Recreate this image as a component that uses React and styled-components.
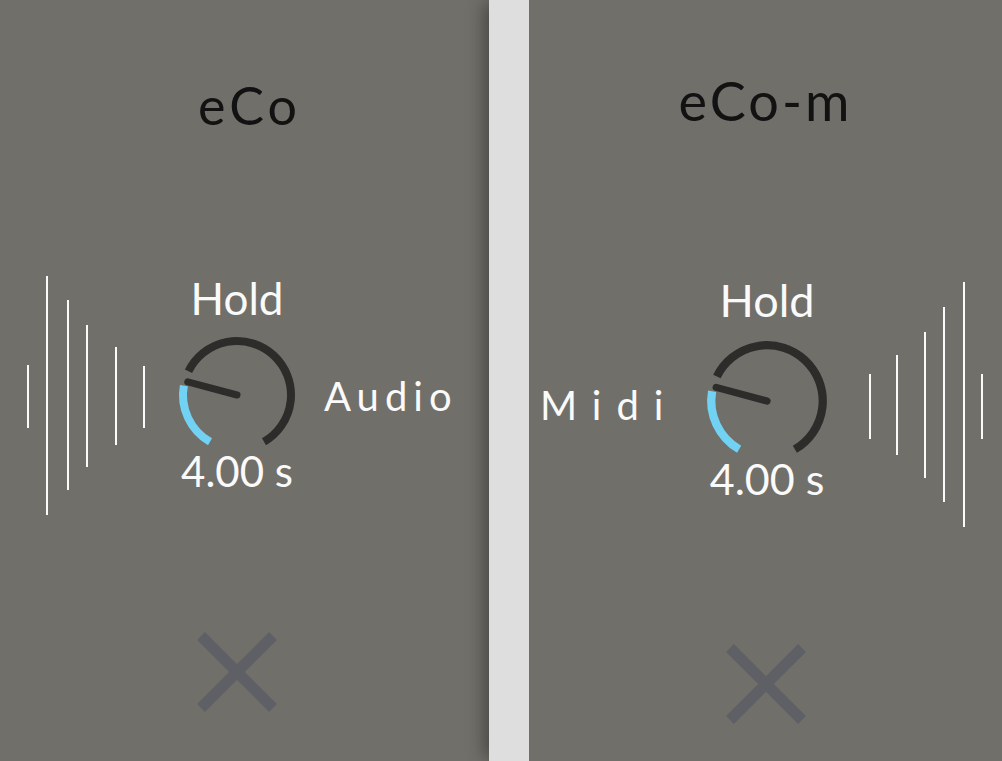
import styled, { createGlobalStyle } from "styled-components";

const GlobalStyle = createGlobalStyle`
  html, body {
    margin: 0;
    padding: 0;
    background: #dedede;
  }
  body {
    font-family: Lato, "Open Sans", sans-serif;
  }
`;

const Screen = styled.div`
  display: flex;
  width: 1002px;
  height: 761px;
  overflow: hidden;
  background: #dedede;
`;

const Panel = styled.section`
  flex: none;
  width: ${(p) => p.$w}px;
  height: 100%;
  background: #716f6a;
  display: flex;
  flex-direction: column;
  align-items: center;
`;

const Divider = styled.div`
  flex: none;
  width: 40px;
  height: 100%;
  background: #dedede;
  box-shadow: -6px 0 18px -2px rgba(0, 0, 0, 0.4);
`;

const Title = styled.h1`
  margin: ${(p) => p.$top}px 0 0 ${(p) => p.$shift || 0}px;
  font-family: Lato, sans-serif;
  font-weight: 400;
  font-size: ${(p) => p.$size}px;
  line-height: ${(p) => p.$size}px;
  letter-spacing: ${(p) => p.$spacing}px;
  color: #121212;
`;

const Row = styled.div`
  align-self: stretch;
  display: flex;
  align-items: center;
  gap: ${(p) => p.$gap}px;
  margin-top: ${(p) => p.$top}px;
  padding-left: ${(p) => p.$left}px;
`;

const SideLabel = styled.span`
  flex: none;
  width: ${(p) => p.$w}px;
  font-size: 40px;
  line-height: 40px;
  letter-spacing: ${(p) => p.$spacing}px;
  color: #fafafa;
  white-space: nowrap;
`;

const KnobBlock = styled.div`
  flex: none;
  width: 130px;
  align-self: flex-start;
  margin-top: ${(p) => p.$top}px;
  display: flex;
  flex-direction: column;
  align-items: center;
  color: #fafafa;
`;

const KnobLabel = styled.div`
  font-size: ${(p) => p.$size}px;
  line-height: ${(p) => p.$size}px;
`;

const KnobValue = styled.div`
  font-size: ${(p) => p.$size}px;
  line-height: ${(p) => p.$size}px;
  margin-top: ${(p) => p.$top}px;
  white-space: nowrap;
`;

const Dial = styled.svg`
  display: block;
  margin-top: ${(p) => p.$top}px;
`;

const Wave = styled.svg`
  flex: none;
  display: block;
`;

const Close = styled.svg`
  display: block;
  flex: none;
  margin-top: ${(p) => p.$top}px;
  margin-left: ${(p) => p.$shift}px;
`;

const C = 62;
const R = 54;

const polar = (deg, r = R) => {
  const a = (deg * Math.PI) / 180;
  return [C + r * Math.cos(a), C + r * Math.sin(a)];
};

const arc = (from, to) => {
  const [x1, y1] = polar(from);
  const [x2, y2] = polar(to);
  const large = to - from > 180 ? 1 : 0;
  return `M ${x1} ${y1} A ${R} ${R} 0 ${large} 1 ${x2} ${y2}`;
};

const Knob = ({ label, value, size, holdSize, valueSize, top, dialTop, valueTop }) => {
  const [px, py] = polar(195, 51);
  return (
    <KnobBlock $top={top}>
      <KnobLabel $size={holdSize}>{label}</KnobLabel>
      <Dial $top={dialTop} width={size} height={size} viewBox="0 0 124 124">
        <path d={arc(206, 420)} fill="none" stroke="#2d2c2a" strokeWidth="8" />
        <path d={arc(120, 190)} fill="none" stroke="#72d2f4" strokeWidth="8" />
        <line x1={C} y1={C} x2={px} y2={py} stroke="#2d2c2a" strokeWidth="7" strokeLinecap="round" />
      </Dial>
      <KnobValue $size={valueSize} $top={valueTop}>{value}</KnobValue>
    </KnobBlock>
  );
};

const Lines = ({ lines, height }) => (
  <Wave width="130" height={height} viewBox={`0 0 130 ${height}`}>
    {lines.map(([x, y1, y2], i) => (
      <line key={i} x1={x} y1={y1} x2={x} y2={y2} stroke="#fafafa" strokeWidth="2" />
    ))}
  </Wave>
);

const CloseIcon = ({ top, shift = 0 }) => (
  <Close $top={top} $shift={shift} width="80" height="80" viewBox="0 0 80 80">
    <line x1="4" y1="4" x2="76" y2="76" stroke="#5e6066" strokeWidth="11" />
    <line x1="76" y1="4" x2="4" y2="76" stroke="#5e6066" strokeWidth="11" />
  </Close>
);

const audioLines = [
  [8, 89, 152],
  [27, 0, 239],
  [48, 24, 214],
  [67, 49, 191],
  [96, 71, 169],
  [124, 90, 152],
];

const midiLines = [
  [8, 92, 157],
  [35, 73, 173],
  [63, 50, 196],
  [82, 25, 220],
  [102, 0, 245],
  [120, 92, 157],
];

export default function App() {
  return (
    <>
      <GlobalStyle />
      <Screen>
        <Panel $w={489}>
          <Title $top={79} $size={52} $spacing={4} $shift={10}>eCo</Title>
          <Row $top={145} $left={20} $gap={22}>
            <Lines lines={audioLines} height={240} />
            <Knob
              label="Hold"
              value="4.00 s"
              size={124}
              holdSize={44}
              valueSize={42}
              top={0}
              dialTop={13}
              valueTop={-7}
            />
            <SideLabel $w={140} $spacing={6}>Audio</SideLabel>
          </Row>
          <CloseIcon top={116} shift={-15} />
        </Panel>
        <Divider />
        <Panel $w={473}>
          <Title $top={74} $size={54} $spacing={3}>eCo-m</Title>
          <Row $top={154} $left={11} $gap={30}>
            <SideLabel $w={132} $spacing={15}>Midi</SideLabel>
            <Knob
              label="Hold"
              value="4.00 s"
              size={128}
              holdSize={45}
              valueSize={43}
              top={-4}
              dialTop={14}
              valueTop={-8}
            />
            <Lines lines={midiLines} height={246} />
          </Row>
          <CloseIcon top={116} />
        </Panel>
      </Screen>
    </>
  );
}
